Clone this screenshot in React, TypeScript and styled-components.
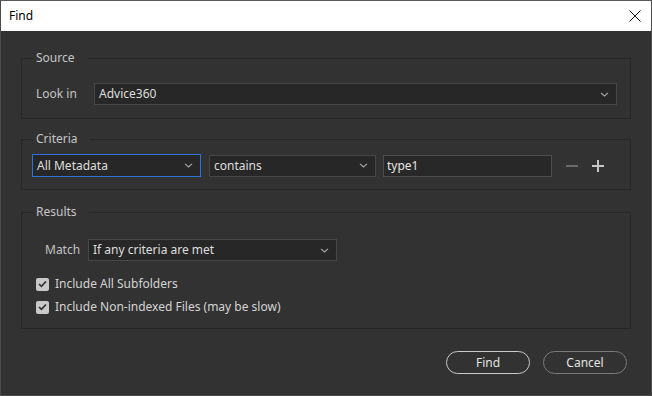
import React from "react";
import styled, { createGlobalStyle } from "styled-components";

const Global = createGlobalStyle`
  html, body { margin: 0; padding: 0; background: #323232; }
  body { font-family: "Noto Sans", "Open Sans", sans-serif; font-size: 12px; line-height: 16px; }
  * { box-sizing: border-box; }
`;

const Window = styled.div`
  width: 652px;
  height: 396px;
  display: flex;
  flex-direction: column;
  background: #323232;
  border: 1px solid #4b4b4b;
  border-top-color: #5a5a5a;
`;

const TitleBar = styled.div`
  height: 30px;
  background: #ffffff;
  display: flex;
  align-items: center;
  justify-content: space-between;
  padding: 0 9px 0 8px;
  color: #000;
  font-size: 12px;
`;

const CloseButton = styled.button`
  width: 14px;
  height: 14px;
  padding: 0;
  border: 0;
  background: transparent;
  display: flex;
  align-items: center;
  justify-content: center;
`;

const Body = styled.div`
  flex: 1;
  display: flex;
  flex-direction: column;
  padding: 19px 20px 0 20px;
`;

const Group = styled.fieldset<{ $pt: number; $pb: number; $pl: number; $mt: number }>`
  margin: ${(p) => p.$mt}px 0 0 0;
  padding: ${(p) => p.$pt}px 13px ${(p) => p.$pb}px ${(p) => p.$pl}px;
  border: 1px solid #272727;
  min-width: 0;

  & > legend {
    margin-left: ${(p) => 11 - p.$pl}px;
  }
`;

const Legend = styled.legend`
  color: #c6c6c6;
  font-size: 12px;
  line-height: 16px;
  padding: 0 12px 0 3px;
`;

const Row = styled.div<{ $indent?: number }>`
  display: flex;
  align-items: center;
  padding-left: ${(p) => p.$indent ?? 0}px;
`;

const Label = styled.span<{ $w: number }>`
  width: ${(p) => p.$w}px;
  color: #c3c3c3;
  flex: none;
`;

const SelectBox = styled.div<{ $w?: number; $focus?: boolean; $h?: number; $ml?: number }>`
  ${(p) => (p.$w ? `width: ${p.$w}px; flex: none;` : "flex: 1;")}
  height: ${(p) => p.$h ?? 22}px;
  margin-left: ${(p) => p.$ml ?? 0}px;
  background: #272727;
  border: 1px solid ${(p) => (p.$focus ? "#2b74d9" : "#474747")};
  display: flex;
  align-items: center;
  justify-content: space-between;
  padding: 0 7px 0 4px;
  color: #dedede;
`;

const TextInput = styled.div<{ $w: number; $ml: number }>`
  width: ${(p) => p.$w}px;
  height: 22px;
  margin-left: ${(p) => p.$ml}px;
  background: #282828;
  border: 1px solid #4d4d4d;
  display: flex;
  align-items: center;
  padding: 0 3px;
  color: #e4e4e4;
`;

const IconBtn = styled.span`
  width: 12px;
  height: 12px;
  margin-left: 14px;
  display: flex;
  align-items: center;
  justify-content: center;
`;

const CheckRow = styled.label<{ $mt: number }>`
  display: flex;
  align-items: center;
  gap: 6px;
  color: #d4d4d4;
  height: 14px;
  line-height: 14px;
  margin-top: ${(p) => p.$mt}px;
`;

const Check = styled.span`
  width: 13px;
  height: 13px;
  border-radius: 2px;
  background: #c9c9c9;
  display: flex;
  align-items: center;
  justify-content: center;
  flex: none;
`;

const Footer = styled.div`
  display: flex;
  justify-content: flex-end;
  gap: 13px;
  padding: 22px 4px 0 0;
`;

const PillButton = styled.button<{ $primary?: boolean }>`
  width: 84px;
  height: 23px;
  border-radius: 12px;
  background: transparent;
  border: 1.5px solid ${(p) => (p.$primary ? "#c9c9c9" : "#7a7a7a")};
  color: #e2e2e2;
  font-family: inherit;
  font-size: 12px;
  padding: 0;
`;

const Chevron = () => (
  <svg width="9" height="5" viewBox="0 0 9 5">
    <path d="M1 0.8 L4.5 4 L8 0.8" fill="none" stroke="#a8a8a8" strokeWidth="1.1" />
  </svg>
);

const Tick = () => (
  <svg width="9" height="8" viewBox="0 0 9 8">
    <path d="M1 4 L3.4 6.3 L8 1.5" fill="none" stroke="#2f2f2f" strokeWidth="1.7" />
  </svg>
);

export default function App() {
  return (
    <>
      <Global />
      <Window>
        <TitleBar>
          <span>Find</span>
          <CloseButton aria-label="Close">
            <svg width="12" height="12" viewBox="0 0 12 12">
              <path d="M0.5 0.5 L11.5 11.5 M11.5 0.5 L0.5 11.5" stroke="#111" strokeWidth="1" />
            </svg>
          </CloseButton>
        </TitleBar>
        <Body>
          <Group $pt={17} $pb={13} $pl={14} $mt={0}>
            <Legend>Source</Legend>
            <Row>
              <Label $w={58}>Look in</Label>
              <SelectBox>
                <span>Advice360</span>
                <Chevron />
              </SelectBox>
            </Row>
          </Group>
          <Group $pt={7} $pb={12} $pl={10} $mt={12}>
            <Legend>Criteria</Legend>
            <Row>
              <SelectBox $w={169} $h={23} $focus>
                <span>All Metadata</span>
                <Chevron />
              </SelectBox>
              <SelectBox $w={167} $ml={8}>
                <span>contains</span>
                <Chevron />
              </SelectBox>
              <TextInput $w={169} $ml={7}>type1</TextInput>
              <IconBtn>
                <svg width="12" height="12" viewBox="0 0 12 12">
                  <path d="M0 6 H12" stroke="#6a6a6a" strokeWidth="2" />
                </svg>
              </IconBtn>
              <IconBtn>
                <svg width="12" height="12" viewBox="0 0 12 12">
                  <path d="M0 6 H12 M6 0 V12" stroke="#c6c6c6" strokeWidth="2" />
                </svg>
              </IconBtn>
            </Row>
          </Group>
          <Group $pt={19} $pb={14} $pl={14} $mt={14}>
            <Legend>Results</Legend>
            <Row $indent={9}>
              <Label $w={43}>Match</Label>
              <SelectBox $w={249}>
                <span>If any criteria are met</span>
                <Chevron />
              </SelectBox>
            </Row>
            <CheckRow $mt={16}>
              <Check><Tick /></Check>
              Include All Subfolders
            </CheckRow>
            <CheckRow $mt={9}>
              <Check><Tick /></Check>
              Include Non-indexed Files (may be slow)
            </CheckRow>
          </Group>
          <Footer>
            <PillButton $primary>Find</PillButton>
            <PillButton>Cancel</PillButton>
          </Footer>
        </Body>
      </Window>
    </>
  );
}
